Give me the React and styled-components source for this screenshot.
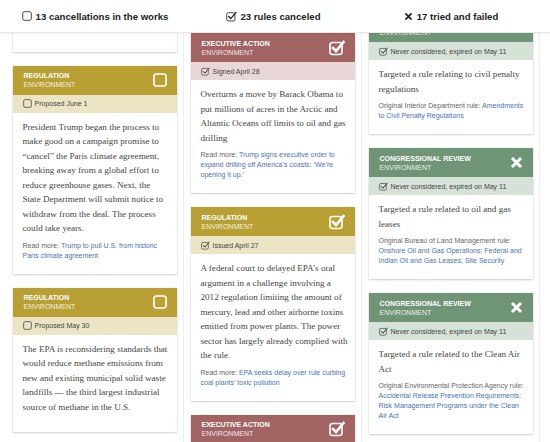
import React, { useLayoutEffect, useRef } from "react";
import styled, { createGlobalStyle } from "styled-components";

const GlobalStyle = createGlobalStyle`
  html, body { margin: 0; padding: 0; background: #fff; }
  body { font-family: "Liberation Sans", Arial, sans-serif; }
`;

const kinds = {
  regulation: { head: "#b8a034", meta: "#ebe5c5", label: "Regulation" },
  executive: { head: "#a26462", meta: "#e9d6d6", label: "Executive action" },
  congress: { head: "#6f9576", meta: "#d6e2d7", label: "Congressional review" },
};

const Page = styled.div`
  width: 550px;
  height: 442px;
  overflow: hidden;
  display: flex;
  flex-direction: column;
`;

const TopBar = styled.div`
  display: grid;
  grid-template-columns: repeat(3, 178px);
  padding-left: 6px;
  height: 33px;
  box-sizing: border-box;
  flex: none;
  border-bottom: 1px solid #e8e8e8;
  box-shadow: 0 1px 2px rgba(0, 0, 0, 0.06);
  position: relative;
  z-index: 1;
`;

const Tab = styled.div`
  display: flex;
  align-items: center;
  justify-content: center;
  gap: 4px;
  font-size: 9.6px;
  font-weight: bold;
  color: #222;
`;

const Columns = styled.div`
  display: grid;
  grid-template-columns: repeat(3, 178px);
  padding-left: 6px;
  flex: 1;
  min-height: 0;
`;

const Column = styled.div`
  overflow: hidden;
  border-right: 1px solid #eee;
  display: flex;
  flex-direction: column;
  align-items: center;
  gap: 14px;
  padding-bottom: 20px;
`;

const Card = styled.div`
  width: 164px;
  flex: none;
  background: #fff;
  box-shadow: 0 1px 2px rgba(0, 0, 0, 0.16), 0 0 0 1px rgba(0, 0, 0, 0.03);
`;

const CardHead = styled.div`
  display: flex;
  align-items: center;
  justify-content: space-between;
  background: ${(p) => p.$color};
  height: 29px;
  padding: 0 10px 0 11px;
  color: #fff;
`;

const Title = styled.div`
  font-size: 7px;
  line-height: 9px;
  font-weight: bold;
  text-transform: uppercase;
`;

const Subtitle = styled.div`
  font-size: 7px;
  line-height: 9px;
  text-transform: uppercase;
  opacity: 0.85;
`;

const Meta = styled.div`
  display: flex;
  align-items: center;
  gap: 3px;
  height: 18px;
  padding: 0 10px;
  background: ${(p) => p.$color};
  font-size: 7px;
  color: #444;
`;

const Body = styled.div`
  padding: 7px 6px 13px 10px;
`;

const Text = styled.p`
  margin: 0 0 5px;
  font-family: "Liberation Serif", "Times New Roman", serif;
  font-size: 9.1px;
  line-height: 14.5px;
  color: #444;
`;

const Note = styled.div`
  font-size: 7px;
  line-height: 10px;
  color: #666;
`;

const Link = styled.a`
  color: #4a72b8;
  text-decoration: none;
`;

function Box({ size = 14, color = "#fff", weight = 1.6 }) {
  return (
    <svg width={size} height={size} viewBox="0 0 14 14">
      <rect x="1" y="1" width="12" height="12" rx="2.5" fill="none" stroke={color} strokeWidth={weight} />
    </svg>
  );
}

function Checked({ size = 16, color = "#fff", weight = 1.6 }) {
  return (
    <svg width={size} height={size} viewBox="0 0 16 16">
      <rect x="1" y="2.5" width="12" height="12" rx="2.5" fill="none" stroke={color} strokeWidth={weight} />
      <path d="M4 8 L7 11 L14.5 2" fill="none" stroke={color} strokeWidth={weight * 1.6} strokeLinecap="square" />
    </svg>
  );
}

function Cross({ size = 13, color = "#fff", weight = 3 }) {
  return (
    <svg width={size} height={size} viewBox="0 0 13 13">
      <path d="M2 2 L11 11 M11 2 L2 11" stroke={color} strokeWidth={weight} />
    </svg>
  );
}

function StatusIcon({ status }) {
  if (status === "done") return <Checked />;
  if (status === "failed") return <Cross />;
  return <Box />;
}

function RuleCard({ kind, status, date, metaChecked, text, note, link, cardRef }) {
  const k = kinds[kind];
  return (
    <Card ref={cardRef}>
      <CardHead $color={k.head}>
        <div>
          <Title>{k.label}</Title>
          <Subtitle>Environment</Subtitle>
        </div>
        <StatusIcon status={status} />
      </CardHead>
      <Meta $color={k.meta}>
        {metaChecked ? <Checked size={9} color="#333" weight={1.1} /> : <Box size={9} color="#333" weight={1.1} />}
        {date}
      </Meta>
      <Body>
        <Text>{text}</Text>
        {note && (
          <Note>
            {note} <Link>{link}</Link>
          </Note>
        )}
      </Body>
    </Card>
  );
}

function Feed({ cards, anchor, offset }) {
  const colRef = useRef(null);
  const refs = useRef([]);
  useLayoutEffect(() => {
    const col = colRef.current;
    const card = refs.current[anchor];
    if (!col || !card) return;
    const delta = card.getBoundingClientRect().top - col.getBoundingClientRect().top;
    col.scrollTop = col.scrollTop + delta - offset;
  }, [anchor, offset]);
  return (
    <Column ref={colRef}>
      {cards.map((c, i) => (
        <RuleCard key={i} {...c} cardRef={(el) => (refs.current[i] = el)} />
      ))}
    </Column>
  );
}

const works = [
  {
    kind: "regulation",
    date: "Proposed June 6",
    text: "The agency proposed delaying a rule on chemical plant safety while it reviews the requirements.",
  },
  {
    kind: "regulation",
    date: "Proposed June 1",
    text: "President Trump began the process to make good on a campaign promise to “cancel” the Paris climate agreement, breaking away from a global effort to reduce greenhouse gases. Next, the State Department will submit notice to withdraw from the deal. The process could take years.",
    note: "Read more:",
    link: "Trump to pull U.S. from historic Paris climate agreement",
  },
  {
    kind: "regulation",
    date: "Proposed May 30",
    text: "The EPA is reconsidering standards that would reduce methane emissions from new and existing municipal solid waste landfills — the third largest industrial source of methane in the U.S.",
  },
];

const canceled = [
  {
    kind: "executive",
    status: "done",
    metaChecked: true,
    date: "Signed April 28",
    text: "Overturns a move by Barack Obama to put millions of acres in the Arctic and Altantic Oceans off limits to oil and gas drilling",
    note: "Read more:",
    link: "Trump signs executive order to expand drilling off America’s coasts: ‘We’re opening it up.’",
  },
  {
    kind: "regulation",
    status: "done",
    metaChecked: true,
    date: "Issued April 27",
    text: "A federal court to delayed EPA’s oral argument in a challenge involving a 2012 regulation limiting the amount of mercury, lead and other airborne toxins emitted from power plants. The power sector has largely already complied with the rule.",
    note: "Read more:",
    link: "EPA seeks delay over rule curbing coal plants’ toxic pollution",
  },
  {
    kind: "executive",
    status: "done",
    metaChecked: true,
    date: "Signed March 28",
    text: "Orders a review of the Clean Power Plan.",
  },
];

const failed = [
  {
    kind: "congress",
    status: "failed",
    metaChecked: true,
    date: "Never considered, expired on May 11",
    text: "Targeted a rule relating to civil penalty regulations",
    note: "Original Interior Department rule:",
    link: "Amendments to Civil Penalty Regulations",
  },
  {
    kind: "congress",
    status: "failed",
    metaChecked: true,
    date: "Never considered, expired on May 11",
    text: "Targeted a rule related to oil and gas leases",
    note: "Original Bureau of Land Management rule:",
    link: "Onshore Oil and Gas Operations; Federal and Indian Oil and Gas Leases; Site Security",
  },
  {
    kind: "congress",
    status: "failed",
    metaChecked: true,
    date: "Never considered, expired on May 11",
    text: "Targeted a rule related to the Clean Air Act",
    note: "Original Environmental Protection Agency rule:",
    link: "Accidental Release Prevention Requirements: Risk Management Programs under the Clean Air Act",
  },
];

export default function App() {
  return (
    <Page>
      <GlobalStyle />
      <TopBar>
        <Tab>
          <Box size={10} color="#222" weight={1.2} />
          13 cancellations in the works
        </Tab>
        <Tab>
          <Checked size={11} color="#222" weight={1.2} />
          23 rules canceled
        </Tab>
        <Tab>
          <Cross size={9} color="#222" weight={2.4} />
          17 tried and failed
        </Tab>
      </TopBar>
      <Columns>
        <Feed cards={works} anchor={1} offset={33} />
        <Feed cards={canceled} anchor={0} offset={0} />
        <Feed cards={failed} anchor={1} offset={115} />
      </Columns>
    </Page>
  );
}
